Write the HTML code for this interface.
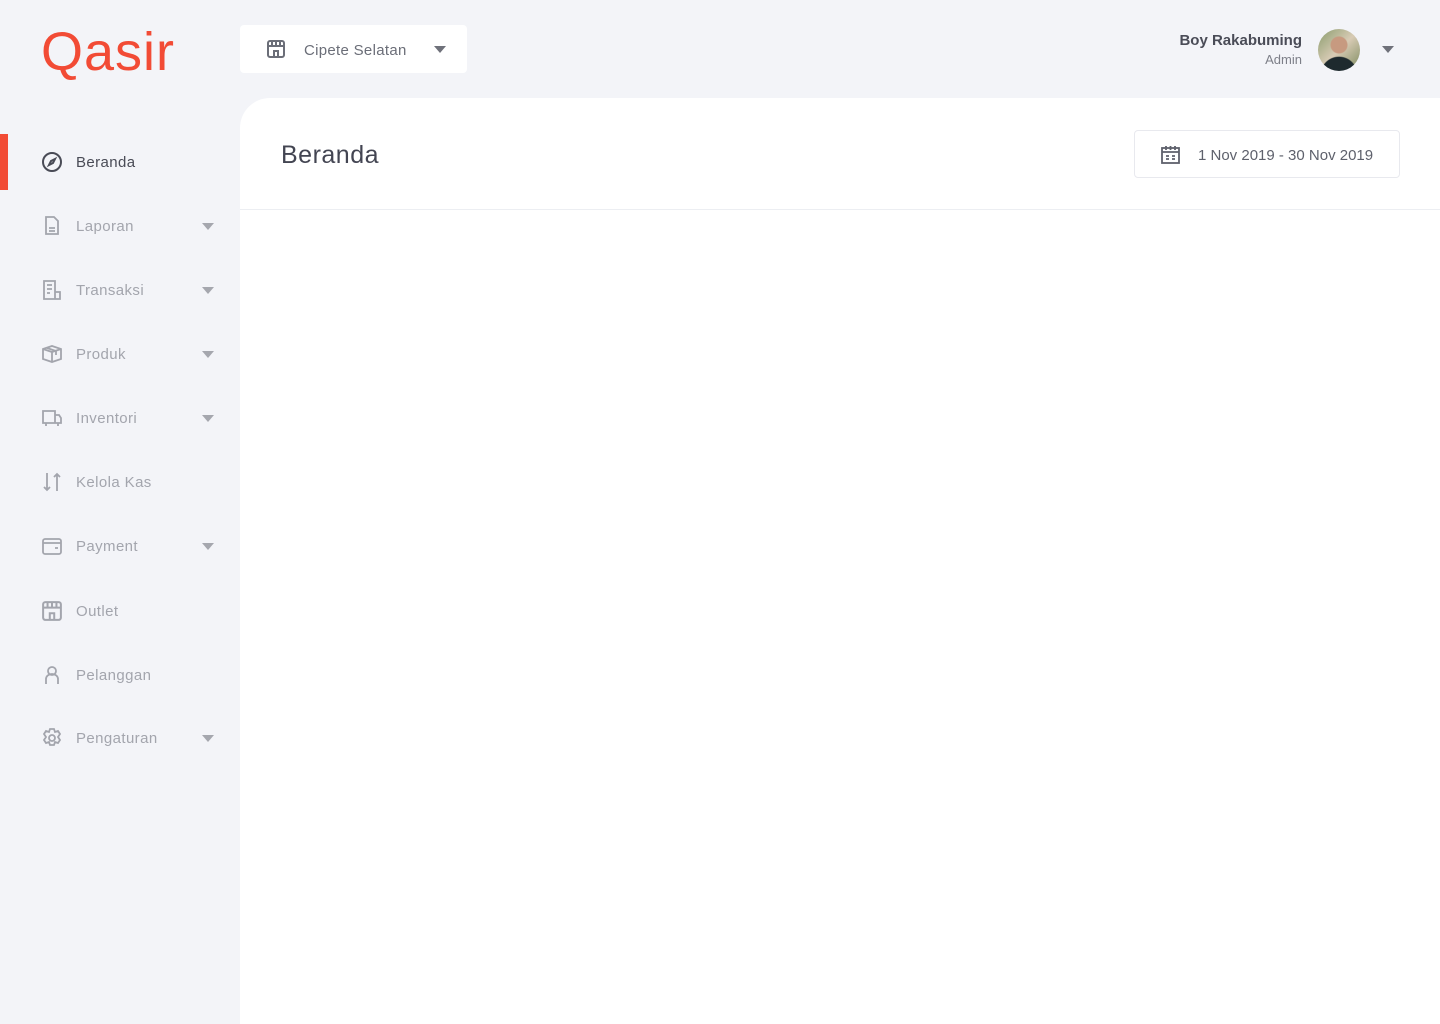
<!DOCTYPE html>
<html><head><meta charset="utf-8"><style>
*{margin:0;padding:0;box-sizing:border-box}
body{width:1440px;height:1024px;background:#f3f4f8;font-family:"Liberation Sans",sans-serif;position:relative;overflow:hidden}
.logo{position:absolute;left:41px;top:22px;color:#f24b35;font-size:54px;letter-spacing:1px;line-height:60px}
.outlet{position:absolute;left:240px;top:25px;width:227px;height:48px;background:#fff;border-radius:4px}
.outlet span{position:absolute;left:64px;top:17px;font-size:15px;color:#6b6e78;letter-spacing:0.3px}
.tri{position:absolute;width:0;height:0;border-left:6px solid transparent;border-right:6px solid transparent;border-top:7px solid #6f717a}
.user{position:absolute;right:138px;top:32px;text-align:right}
.user b{display:block;font-size:15px;color:#4a4c57;font-weight:bold}
.user i{display:block;font-style:normal;font-size:13px;color:#7d7f88;margin-top:3px}
.av{position:absolute;left:1318px;top:29px;width:42px;height:42px;border-radius:50%;background:radial-gradient(circle at 50% 38%,#c79a80 0 8px,transparent 9px),radial-gradient(circle at 50% 110%,#1e2a2e 0 18px,transparent 19px),linear-gradient(135deg,#8a9c6d,#d8cbb5 50%,#7c8a5e)}
.main{position:absolute;left:240px;top:98px;width:1200px;height:926px;background:#fff;border-top-left-radius:30px}
.main h1{position:absolute;left:41px;top:43px;font-size:25px;font-weight:normal;color:#434552;letter-spacing:0.5px}
.hr{position:absolute;left:0;top:111px;width:100%;height:1px;background:#eceef2}
.date{position:absolute;left:894px;top:32px;width:266px;height:48px;border:1px solid #e8e9ee;border-radius:4px}
.date span{position:absolute;left:63px;top:16px;font-size:15px;color:#5e616c}
.nav{position:absolute;left:0;width:240px;height:56px}
.nav svg{position:absolute;left:42px;top:18px}
.nav span{position:absolute;left:76px;top:20px;font-size:15px;color:#a3a5ad;letter-spacing:0.4px}
.nav .tri{left:202px;top:25px;border-top-color:#a5a7ae}
.act span{color:#494b56}
.bar{position:absolute;left:0;top:134px;width:8px;height:56px;background:#f24b35}
</style></head><body>
<div class="logo">Qasir</div>
<div class="outlet">
<svg style="position:absolute;left:27px;top:15px" width="18" height="18" viewBox="0 0 18 18" fill="none" stroke="#6b6e78" stroke-width="2"><rect x="1" y="1" width="16" height="16" rx="2"/><path d="M1 6h16M5 1v5M9 1v5M13 1v5M7 17v-6h4v6"/></svg>
<span>Cipete Selatan</span><div class="tri" style="left:194px;top:21px"></div></div>
<div class="user"><b>Boy Rakabuming</b><i>Admin</i></div>
<div class="av"></div>
<div class="tri" style="left:1382px;top:46px"></div>
<div class="bar"></div>
<div class="nav act" style="top:134px"><svg width="20" height="20" viewBox="0 0 20 20" fill="none" stroke="#494b56" stroke-width="2"><circle cx="10" cy="10" r="9"/><path d="M13 7l-4 2-2 4 4-2z"/></svg><span>Beranda</span></div>
<div class="nav" style="top:198px"><svg width="20" height="20" viewBox="0 0 20 20" fill="none" stroke="#a3a5ad" stroke-width="1.8"><path d="M4 1h8l4 4v13H4z M7 12h6M7 15h6"/></svg><span>Laporan</span><div class="tri"></div></div>
<div class="nav" style="top:262px"><svg width="20" height="20" viewBox="0 0 20 20" fill="none" stroke="#a3a5ad" stroke-width="1.8"><path d="M2 1h11v18H2z M5 5h5M5 9h5M5 13h3M13 12h5v7h-5"/></svg><span>Transaksi</span><div class="tri"></div></div>
<div class="nav" style="top:326px"><svg width="20" height="20" viewBox="0 0 20 20" fill="none" stroke="#a3a5ad" stroke-width="1.8"><path d="M1 5l9-3 9 3v10l-9 3-9-3z M1 5l9 3 9-3 M10 8v10 M5 4l9 3v4"/></svg><span>Produk</span><div class="tri"></div></div>
<div class="nav" style="top:390px"><svg width="20" height="20" viewBox="0 0 20 20" fill="none" stroke="#a3a5ad" stroke-width="1.8"><path d="M1 3h12v12H1z M13 7h4l2 3v5h-6 M4 15v3M16 15v3"/></svg><span>Inventori</span><div class="tri"></div></div>
<div class="nav" style="top:454px"><svg width="20" height="20" viewBox="0 0 20 20" fill="none" stroke="#a3a5ad" stroke-width="1.8"><path d="M5 1v17M2 15l3 3 3-3M15 19V2M12 5l3-3 3 3"/></svg><span>Kelola Kas</span></div>
<div class="nav" style="top:518px"><svg width="20" height="20" viewBox="0 0 20 20" fill="none" stroke="#a3a5ad" stroke-width="1.8"><rect x="1" y="3" width="18" height="15" rx="2"/><path d="M1 7h18M13 12h3"/></svg><span>Payment</span><div class="tri"></div></div>
<div class="nav" style="top:583px"><svg width="20" height="20" viewBox="0 0 18 18" fill="none" stroke="#a3a5ad" stroke-width="1.8"><rect x="1" y="1" width="16" height="16" rx="2"/><path d="M1 6h16M5 1v5M9 1v5M13 1v5M7 17v-6h4v6"/></svg><span>Outlet</span></div>
<div class="nav" style="top:647px"><svg width="20" height="20" viewBox="0 0 20 20" fill="none" stroke="#a3a5ad" stroke-width="1.8"><circle cx="10" cy="6" r="4"/><path d="M4 19v-5a6 5 0 0 1 12 0v5"/></svg><span>Pelanggan</span></div>
<div class="nav" style="top:710px"><svg width="20" height="20" viewBox="0 0 20 20" fill="none" stroke="#a3a5ad" stroke-width="1.8"><circle cx="10" cy="10" r="3"/><path d="M8 1h4l1 3 3-1 2 3-2 3 2 3-2 3-3-1-1 3H8l-1-3-3 1-2-3 2-3-2-3 2-3 3 1z"/></svg><span>Pengaturan</span><div class="tri"></div></div>
<div class="main"><h1>Beranda</h1>
<div class="date"><svg style="position:absolute;left:26px;top:14px" width="19" height="19" viewBox="0 0 19 19" fill="none" stroke="#5e616c" stroke-width="1.8"><rect x="1" y="3" width="17" height="15"/><path d="M5 1v4M9.5 1v4M14 1v4M1 7h17M5 11h3M11 11h3M5 14h3M11 14h3"/></svg><span>1 Nov 2019 - 30 Nov 2019</span></div>
<div class="hr"></div></div>
</body></html>
